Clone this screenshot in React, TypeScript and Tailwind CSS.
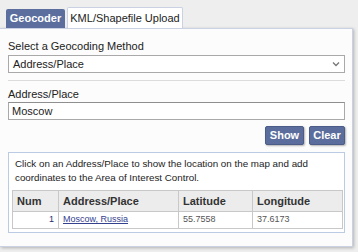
export default function App() {
  const rows = [{ num: 1, place: 'Moscow, Russia', lat: '55.7558', lng: '37.6173' }];

  return (
    <div className="w-[358px] h-[252px] bg-[#eeeeee] text-[#222] font-['Liberation_Sans',Arial,sans-serif]">
      {/* Tabs */}
      <div className="flex items-end h-[28px] pl-[6px] gap-[2px]">
        <div className="h-[19px] w-[59px] bg-[#5b6e9e] rounded-t-[2px] text-white font-bold text-[11px] flex items-center justify-center">
          Geocoder
        </div>
        <div className="h-[21px] w-[116px] bg-white border border-b-0 border-[#c9d1e2] rounded-t-[2px] text-[11px] flex items-center justify-center">
          KML/Shapefile Upload
        </div>
      </div>

      {/* Panel */}
      <div className="w-[353px] h-[219px] bg-[#fcfcfc] border border-l-0 border-[#c9d1e2] shadow-[1px_1px_3px_rgba(0,0,0,0.25)] pl-[8px] pr-[7px] pt-[11px]">
        <div className="text-[11px] leading-[13px]">Select a Geocoding Method</div>
        <div className="mt-[2px] h-[18px] border border-[#a9a9a9] bg-white flex items-center justify-between pl-[4px] pr-[4px] text-[11px]">
          <span>Address/Place</span>
          <svg width="8" height="6" viewBox="0 0 8 6">
            <path d="M1 1.5 L4 4.5 L7 1.5" fill="none" stroke="#777" strokeWidth="1.3" />
          </svg>
        </div>

        <div className="mt-[7px] border-t border-[#dcdcdc]" />

        <div className="mt-[7px] text-[11px] leading-[13px]">Address/Place</div>
        <div className="mt-[1px] h-[18px] border border-[#a9a9a9] border-t-[#8f8f8f] bg-white flex items-center pl-[3px] text-[11px]">
          Moscow
        </div>

        <div className="mt-[6px] flex justify-end gap-[5px]">
          <button className="h-[19px] w-[39px] bg-[#5a6d9d] border border-[#4b5c88] rounded-[2px] text-white font-bold text-[11px] shadow-[1px_1px_2px_rgba(0,0,0,0.3)]">
            Show
          </button>
          <button className="h-[19px] w-[36px] bg-[#5a6d9d] border border-[#4b5c88] rounded-[2px] text-white font-bold text-[11px] shadow-[1px_1px_2px_rgba(0,0,0,0.3)]">
            Clear
          </button>
        </div>

        {/* Results box */}
        <div className="mt-[7px] h-[81px] border border-[#bccbe4] bg-white px-[3px] pt-[4px]">
          <p className="px-[3px] text-[9.8px] leading-[14px] text-[#222]">
            Click on an Address/Place to show the location on the map and add coordinates to the Area of Interest Control.
          </p>
          <table className="mt-[5px] w-[330px] border-collapse table-fixed">
            <colgroup>
              <col className="w-[46px]" />
              <col className="w-[120px]" />
              <col className="w-[74px]" />
              <col className="w-[90px]" />
            </colgroup>
            <thead>
              <tr className="h-[21px] bg-[#ececec] text-[11px] font-bold text-[#333]">
                <th className="border border-[#c8c8c8] text-left pl-[4px]">Num</th>
                <th className="border border-[#c8c8c8] text-left pl-[4px]">Address/Place</th>
                <th className="border border-[#c8c8c8] text-left pl-[4px]">Latitude</th>
                <th className="border border-[#c8c8c8] text-left pl-[4px]">Longitude</th>
              </tr>
            </thead>
            <tbody>
              {rows.map((r) => (
                <tr key={r.num} className="h-[17px] text-[9px]">
                  <td className="border border-[#c8c8c8] text-right pr-[4px] text-[#2b2d6e]">{r.num}</td>
                  <td className="border border-[#c8c8c8] pl-[4px]">
                    <span className="text-[#34418f] underline">{r.place}</span>
                  </td>
                  <td className="border border-[#c8c8c8] pl-[4px] text-[#555]">{r.lat}</td>
                  <td className="border border-[#c8c8c8] pl-[4px] text-[#555]">{r.lng}</td>
                </tr>
              ))}
            </tbody>
          </table>
        </div>
      </div>
    </div>
  );
}
